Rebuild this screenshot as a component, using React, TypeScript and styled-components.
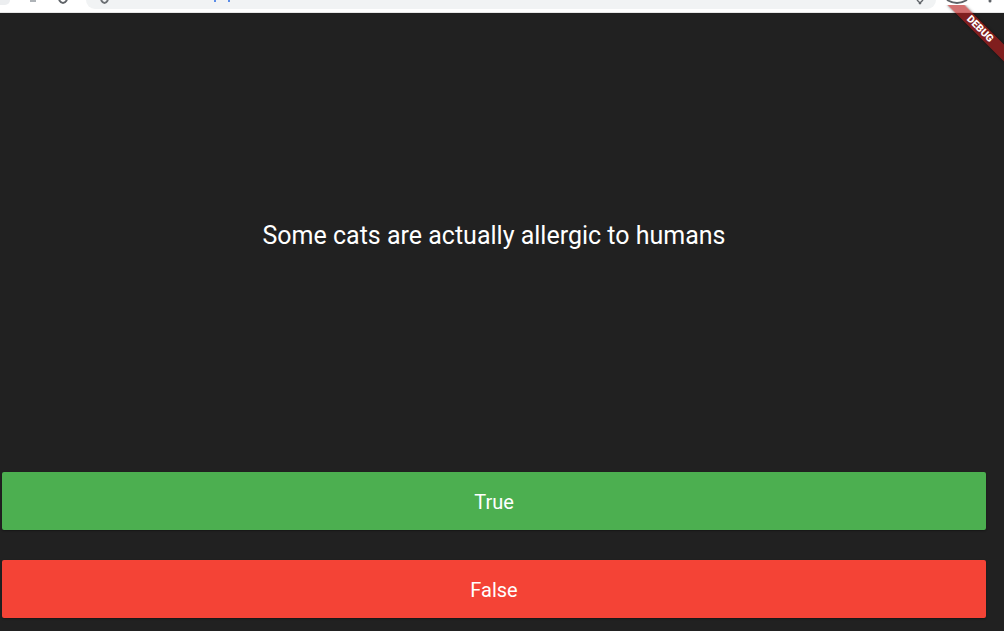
import React from "react";
import styled, { createGlobalStyle } from "styled-components";

const Global = createGlobalStyle`
  html, body { margin: 0; padding: 0; background: #212121; }
  body { font-family: Roboto, "Noto Sans", sans-serif; overflow: hidden; }
`;

const Window = styled.div`
  width: 1004px;
  height: 631px;
  display: flex;
  flex-direction: column;
  overflow: hidden;
`;

const Chrome = styled.div`
  height: 13px;
  flex: none;
  background: #ffffff;
  display: flex;
  align-items: flex-start;
  border-bottom: 1px solid #e6e6e6;
  box-sizing: border-box;
  overflow: hidden;
`;

const TabStub = styled.div`
  width: 10px;
  height: 5px;
  flex: none;
  background: #eceef0;
  border-bottom-right-radius: 6px;
`;

const NavGroup = styled.div`
  display: flex;
  align-items: flex-start;
  gap: 22px;
  padding: 0 18px 0 20px;
`;

const Omnibox = styled.div`
  width: 850px;
  height: 9px;
  flex: none;
  background: #f1f3f4;
  border-radius: 0 0 9px 9px;
  display: flex;
  align-items: flex-start;
  padding: 0 12px 0 14px;
  box-sizing: border-box;
`;

const UrlFrag = styled.div`
  display: flex;
  gap: 12px;
  margin-left: 105px;
`;

const UrlMark = styled.span`
  width: 2px;
  height: 2px;
  background: #5b8de8;
`;

const Grow = styled.div`
  flex: 1;
`;

const RightGroup = styled.div`
  display: flex;
  align-items: flex-start;
  gap: 20px;
  padding-left: 10px;
`;

const Screen = styled.div`
  flex: 1;
  position: relative;
  background: #212121;
  display: flex;
`;

const Main = styled.div`
  width: 988px;
  display: flex;
  flex-direction: column;
`;

const QuestionArea = styled.div`
  height: 444px;
  display: flex;
  align-items: center;
  justify-content: center;
`;

const Question = styled.div`
  color: #ffffff;
  font-family: Roboto, sans-serif;
  font-size: 25px;
  text-align: center;
`;

const Buttons = styled.div`
  display: flex;
  flex-direction: column;
  gap: 30px;
  padding: 15px 2px 0 2px;
`;

const AnswerButton = styled.button<{ $color: string }>`
  height: 58px;
  border: none;
  border-radius: 2px;
  background: ${(p) => p.$color};
  color: #ffffff;
  font-family: Roboto, sans-serif;
  font-size: 20px;
  box-shadow: 0 1px 2px rgba(0, 0, 0, 0.35);
  cursor: pointer;
  padding: 2px 0 0 0;
`;

const Banner = styled.div`
  position: absolute;
  top: -8px;
  right: 0;
  width: 60px;
  height: 60px;
  overflow: hidden;
  pointer-events: none;
`;

const BannerStripe = styled.div`
  position: absolute;
  width: 80px;
  height: 12px;
  left: -4px;
  top: 18px;
  transform: rotate(45deg);
  background: rgba(183, 28, 28, 0.63);
  color: #ffffff;
  font-family: Roboto, sans-serif;
  font-weight: 900;
  font-size: 10.2px;
  line-height: 12px;
  text-align: center;
  box-shadow: 0 0 3px rgba(0, 0, 0, 0.5);
`;

const ArcIcon = ({ w, color }: { w: number; color: string }) => (
  <svg width={w} height={5} viewBox={`0 0 ${w} 5`}>
    <path
      d={`M1 0 Q ${w / 2} 6 ${w - 1} 0`}
      fill="none"
      stroke={color}
      strokeWidth={2}
    />
  </svg>
);

const XMark = () => (
  <svg width={8} height={5} viewBox="0 0 8 5">
    <path d="M1 0 L5 4 M7 0 L3 4" stroke="#5f6368" strokeWidth={1.4} fill="none" />
  </svg>
);

const Dots = () => (
  <svg width={4} height={4} viewBox="0 0 4 4">
    <circle cx={2} cy={1} r={1.5} fill="#5f6368" />
  </svg>
);

export default function App() {
  return (
    <>
      <Global />
      <Window>
        <Chrome>
          <TabStub />
          <NavGroup>
            <svg width={6} height={3} viewBox="0 0 6 3">
              <path d="M0 1 H6" stroke="#9aa0a6" strokeWidth={1.6} />
            </svg>
            <ArcIcon w={10} color="#5f6368" />
          </NavGroup>
          <Omnibox>
            <ArcIcon w={9} color="#6b6f73" />
            <UrlFrag>
              <UrlMark />
              <UrlMark />
            </UrlFrag>
            <Grow />
            <XMark />
          </Omnibox>
          <RightGroup>
            <ArcIcon w={22} color="#5f6368" />
            <Dots />
          </RightGroup>
        </Chrome>
        <Screen>
          <Main>
            <QuestionArea>
              <Question>Some cats are actually allergic to humans</Question>
            </QuestionArea>
            <Buttons>
              <AnswerButton $color="#4caf50">True</AnswerButton>
              <AnswerButton $color="#f44336">False</AnswerButton>
            </Buttons>
          </Main>
          <Banner>
            <BannerStripe>DEBUG</BannerStripe>
          </Banner>
        </Screen>
      </Window>
    </>
  );
}
